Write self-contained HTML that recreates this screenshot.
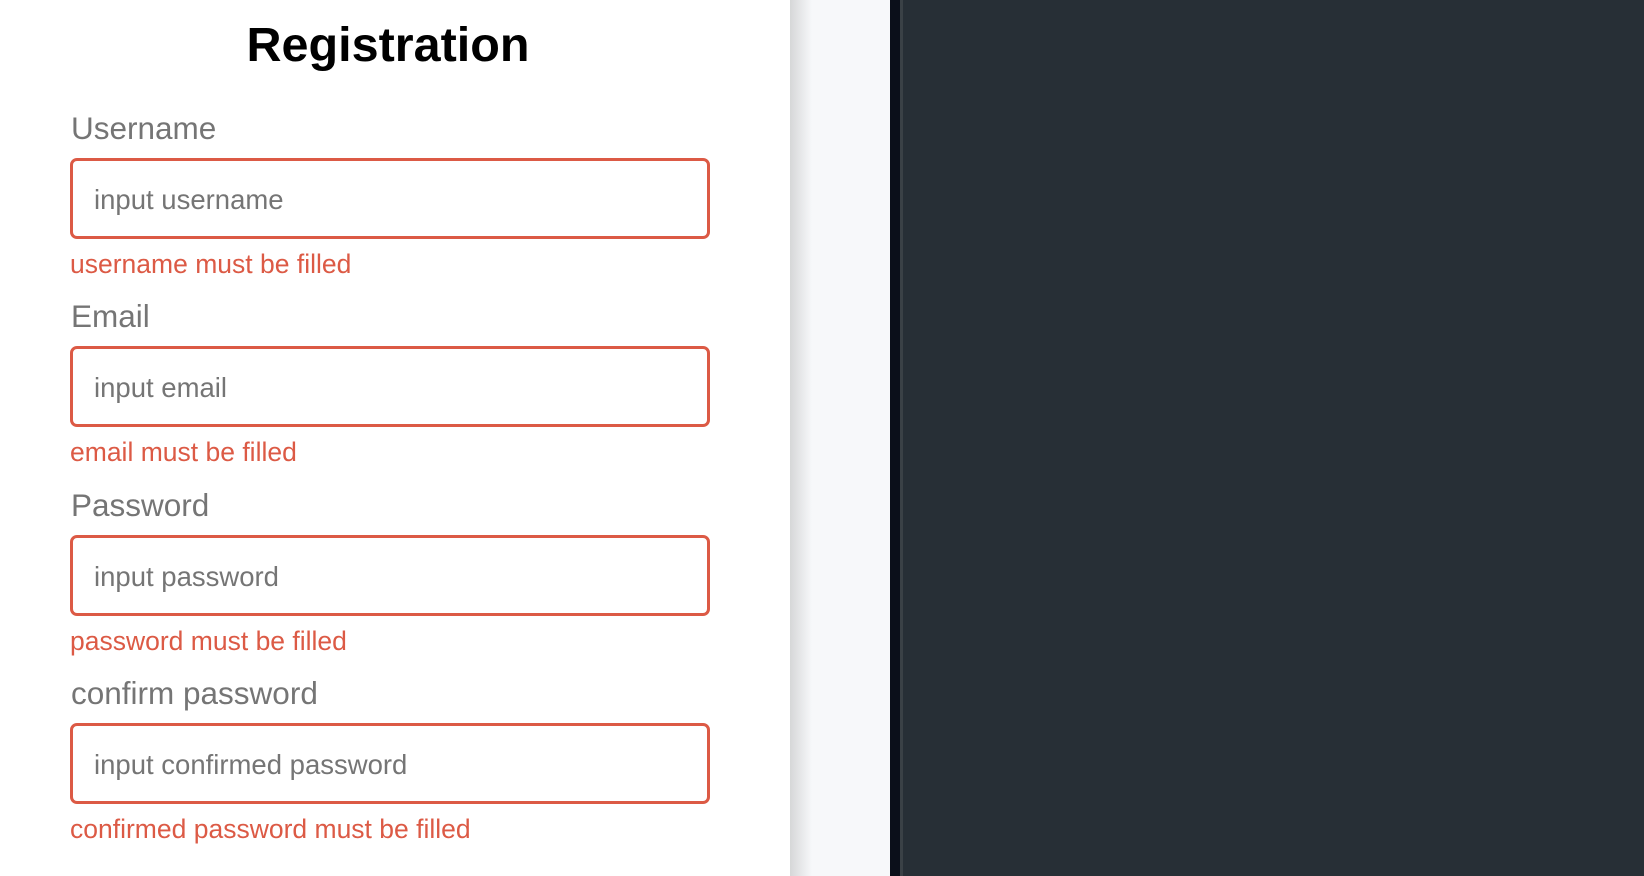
<!DOCTYPE html>
<html><head><meta charset="utf-8"><style>
html,body{margin:0;padding:0;width:1644px;height:876px;overflow:hidden;font-family:"Liberation Sans",Arial,sans-serif;}
.left{position:absolute;left:0;top:0;width:790px;height:876px;background:#fff;}
.mid{position:absolute;left:790px;top:0;width:100px;height:876px;background:#f7f8fa;}
.shadow{position:absolute;left:790px;top:0;width:22px;height:876px;background:linear-gradient(to right,#d6d7d8,#f7f8fa);}
.bar{position:absolute;left:890px;top:0;width:10px;height:876px;background:#0b0f1a;}
.bar2{position:absolute;left:900px;top:0;width:3px;height:876px;background:#3a4146;}
.dark{position:absolute;left:903px;top:0;width:741px;height:876px;background:#272f36;}
h1{position:absolute;left:0;width:776px;text-align:center;top:10px;margin:0;font-size:48.5px;font-weight:bold;color:#000;line-height:70px;}
.lbl{position:absolute;left:71px;font-size:31.5px;color:#757575;line-height:34px;}
.inp{position:absolute;left:70px;width:640px;height:81px;box-sizing:border-box;border:3px solid #dc5a45;border-radius:7px;background:#fff;}
.inp span{position:absolute;left:21px;top:23px;font-size:27.5px;color:#757575;line-height:32px;}
.err{position:absolute;left:70px;font-size:26.5px;color:#dc5a45;line-height:28px;}
</style></head><body>
<div class="left">
<h1>Registration</h1>
<div class="lbl" style="top:111px">Username</div>
<div class="inp" style="top:158px"><span>input username</span></div>
<div class="err" style="top:250px">username must be filled</div>
<div class="lbl" style="top:299px">Email</div>
<div class="inp" style="top:346px"><span>input email</span></div>
<div class="err" style="top:438px">email must be filled</div>
<div class="lbl" style="top:488px">Password</div>
<div class="inp" style="top:535px"><span>input password</span></div>
<div class="err" style="top:627px">password must be filled</div>
<div class="lbl" style="top:676px">confirm password</div>
<div class="inp" style="top:723px"><span>input confirmed password</span></div>
<div class="err" style="top:815px">confirmed password must be filled</div>
</div>
<div class="mid"></div><div class="shadow"></div>
<div class="bar"></div><div class="bar2"></div><div class="dark"></div>
</body></html>
